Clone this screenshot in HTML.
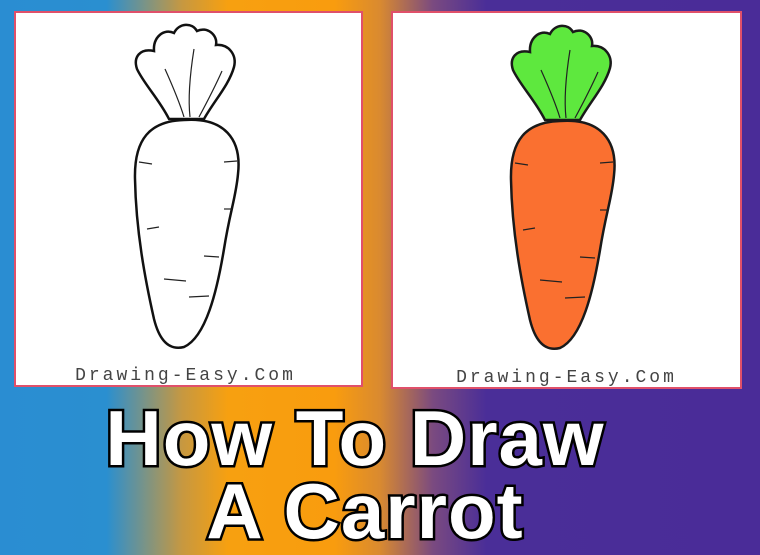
<!DOCTYPE html>
<html><head><style>
html,body{margin:0;padding:0}
body{width:760px;height:535px;overflow:hidden;position:relative;
background:linear-gradient(90deg,#2a8dd2 0%,#2a8fd0 14%,#c79840 24%,#f7a010 30%,#f99c0e 44%,#d98a30 50%,#7a4a80 57%,#4a2e98 64%,#4a2c98 100%);
font-family:"Liberation Sans",sans-serif}
.panel{position:absolute;background:#fff;border:2px solid #e0506a;box-sizing:border-box}
.lbl{position:absolute;left:0;right:0;text-align:center;font-family:"Liberation Mono",monospace;font-size:18px;letter-spacing:3px;color:#444}
.t{position:absolute;left:0;width:710px;text-align:center;font-weight:900;font-size:78px;color:#fff;white-space:nowrap;
-webkit-text-stroke:5px #000;paint-order:stroke fill;font-family:"Liberation Sans",sans-serif;letter-spacing:1px;line-height:1}
svg{position:absolute;left:0;top:0}
</style></head><body>
<div class="panel" style="left:14px;top:11px;width:349px;height:376px"><div class="lbl" style="top:353px;left:-6px">Drawing-Easy.Com</div></div>
<div class="panel" style="left:391px;top:11px;width:351px;height:378px"><div class="lbl" style="top:355px">Drawing-Easy.Com</div></div>
<svg width="760" height="535" viewBox="0 0 760 535">
<defs>
<g id="lv"><path d="M545 120 C535 100 520 85 513 70 C509 58 516 49 530 52 C529 38 540 29 550 34 C555 24 568 23 573 32 C583 27 594 36 592 46 C605 45 613 56 610 68 C605 86 590 102 580 120 Z"/></g>
<g id="bd"><path d="M560 121 C600 118 618 140 614 175 C612 198 606 212 600 250 C593 292 582 338 560 348 C544 352 535 340 530 320 C521 280 512 232 511 180 C510 140 526 122 560 121 Z"/></g>
<g id="ln" fill="none" stroke="#222" stroke-width="1.2">
<path d="M570 50 C566 75 564 100 566 118"/><path d="M541 70 C550 90 556 105 560 118"/><path d="M598 72 C590 90 582 105 575 118"/>
<path d="M515 163 L528 165"/><path d="M600 163 L613 162"/><path d="M523 230 L535 228"/><path d="M600 210 L608 210"/><path d="M580 257 L595 258"/><path d="M540 280 L562 282"/><path d="M565 298 L585 297"/>
</g>
</defs>
<g fill="#5ee83e" stroke="#1a1a1a" stroke-width="2.5"><use href="#lv"/></g>
<g fill="#fa7030" stroke="#1a1a1a" stroke-width="2.5"><use href="#bd"/></g>
<use href="#ln"/>
<g transform="translate(-376,-1)">
<g fill="#fff" stroke="#111" stroke-width="2.5"><use href="#lv"/><use href="#bd"/></g>
<use href="#ln"/>
</g>
</svg>
<div class="t" style="top:399px;left:0px">How To Draw</div>
<div class="t" style="top:472px;left:10px">A Carrot</div>
</body></html>
